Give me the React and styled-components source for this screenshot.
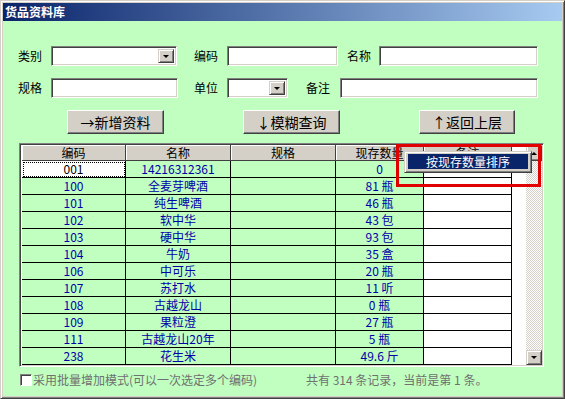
import React from 'react';
import styled, { createGlobalStyle } from 'styled-components';

const GlobalStyle = createGlobalStyle`
  html, body {
    margin: 0;
    padding: 0;
  }
  body {
    width: 565px;
    height: 399px;
    overflow: hidden;
    font-family: "Noto Sans CJK SC", "Liberation Sans", sans-serif;
    font-size: 12px;
  }
`;

const Window = styled.div`
  width: 565px;
  height: 399px;
  box-sizing: border-box;
  display: flex;
  flex-direction: column;
  background: #d4d0c8;
  border: 1px solid;
  border-color: #d4d0c8 #404040 #404040 #d4d0c8;
  box-shadow: inset 1px 1px #ffffff, inset -1px -1px #808080;
  padding: 2px;
`;

const TitleBar = styled.div`
  height: 18px;
  flex: none;
  background: linear-gradient(90deg, #0a246a, #a6caf0);
  color: #ffffff;
  font-weight: bold;
  font-size: 12px;
  line-height: 18px;
  padding-left: 2px;
`;

const Body = styled.div`
  flex: 1;
  position: relative;
  background: #c0ffc0;
  padding: 25px 0 0 15px;
  box-sizing: border-box;
`;

const FormRow = styled.div`
  display: flex;
  align-items: center;
  height: 20px;
  margin-top: ${(p) => p.$mt || 0}px;
`;

const Label = styled.span`
  width: ${(p) => p.$w}px;
  margin-left: ${(p) => p.$ml || 0}px;
  color: #000;
  font-size: 12px;
  line-height: 20px;
  flex: none;
`;

const TextBox = styled.div`
  position: relative;
  width: ${(p) => p.$w}px;
  height: 20px;
  box-sizing: border-box;
  background: #ffffff;
  border: 1px solid;
  border-color: #808080 #ffffff #ffffff #808080;
  box-shadow: inset 1px 1px #404040, inset -1px -1px #d4d0c8;
  flex: none;
`;

const DropButton = styled.div`
  position: absolute;
  right: 2px;
  top: 2px;
  width: 16px;
  height: 14px;
  box-sizing: border-box;
  background: #d4d0c8;
  border: 1px solid;
  border-color: #d4d0c8 #404040 #404040 #d4d0c8;
  box-shadow: inset 1px 1px #ffffff, inset -1px -1px #808080;
  display: flex;
  align-items: center;
  justify-content: center;

  &::after {
    content: '';
    border-left: 3px solid transparent;
    border-right: 3px solid transparent;
    border-top: 3px solid #000;
    margin-top: 1px;
  }
`;

const ButtonRow = styled.div`
  display: flex;
  gap: 79px;
  margin: 12px 0 0 49px;
`;

const Button = styled.div`
  width: ${(p) => p.$w}px;
  height: 24px;
  box-sizing: border-box;
  background: #d4d0c8;
  border: 1px solid;
  border-color: #ffffff #404040 #404040 #ffffff;
  box-shadow: inset -1px -1px #808080;
  display: flex;
  align-items: center;
  justify-content: center;
  font-size: 14px;
  color: #000;
`;

const GridFrame = styled.div`
  display: flex;
  width: 525px;
  height: 224px;
  box-sizing: border-box;
  margin: 9px 0 0 1px;
  border: 1px solid;
  border-color: #808080 #ffffff #ffffff #808080;
  box-shadow: inset 1px 1px #404040, inset -1px -1px #d4d0c8;
  padding: 1px 1px 1px 2px;
  background: #ffffff;
`;

const TableArea = styled.div`
  flex: 1;
  background: #ffffff;
`;

const TableRow = styled.div`
  display: grid;
  grid-template-columns: 104px 105px 105px 88px 88px;
`;

const HeadCell = styled.div`
  height: 16px;
  box-sizing: border-box;
  background: #d4d0c8;
  border-right: 1px solid #404040;
  border-bottom: 1px solid #404040;
  box-shadow: inset 1px 1px #ffffff;
  text-align: center;
  line-height: 15px;
  color: #000;
`;

const Cell = styled.div`
  height: 17px;
  box-sizing: border-box;
  background: ${(p) => (p.$white ? '#ffffff' : '#c0ffc0')};
  border-right: 1px solid #000;
  border-bottom: 1px solid #000;
  text-align: center;
  line-height: 16px;
  color: #0000a8;
  white-space: pre;
`;

const SelectedCell = styled(Cell)`
  background: #ffffff;
  color: #000;
  outline: 1px dotted #000;
  outline-offset: -2px;
`;

const ScrollBar = styled.div`
  width: 16px;
  display: flex;
  flex-direction: column;
  background-color: #ffffff;
  background-image: repeating-conic-gradient(#d4d0c8 0 25%, #ffffff 0 50%);
  background-size: 2px 2px;
`;

const ScrollButton = styled.div`
  width: 16px;
  height: ${(p) => p.$h}px;
  margin-top: ${(p) => (p.$bottom ? 'auto' : '0')};
  box-sizing: border-box;
  background: #d4d0c8;
  border: 1px solid;
  border-color: #d4d0c8 #404040 #404040 #d4d0c8;
  box-shadow: inset 1px 1px #ffffff, inset -1px -1px #808080;
  display: flex;
  align-items: center;
  justify-content: center;

  &::after {
    content: '';
    border-left: 3px solid transparent;
    border-right: 3px solid transparent;
    ${(p) => (p.$up ? 'border-bottom: 3px solid #000;' : 'border-top: 3px solid #000;')}
  }
`;

const Footer = styled.div`
  display: flex;
  align-items: center;
  height: 13px;
  margin: 6px 0 0 2px;
  color: #707070;
  font-size: 12px;
`;

const CheckBox = styled.div`
  width: 12px;
  height: 12px;
  box-sizing: border-box;
  background: #ffffff;
  border: 1px solid;
  border-color: #808080 #ffffff #ffffff #808080;
  box-shadow: inset 1px 1px #404040;
  margin-right: 1px;
  flex: none;
`;

const FooterLeft = styled.span`
  width: 273px;
  white-space: nowrap;
`;

const FooterRight = styled.span`
  white-space: pre;
`;

const RedMark = styled.div`
  position: absolute;
  left: 393px;
  top: 123px;
  width: 145px;
  height: 43px;
  box-sizing: border-box;
  border: 3px solid #e00000;
`;

const PopupMenu = styled.div`
  position: absolute;
  left: 401px;
  top: 130px;
  width: 128px;
  height: 22px;
  box-sizing: border-box;
  background: #d4d0c8;
  border: 1px solid;
  border-color: #d4d0c8 #404040 #404040 #d4d0c8;
  box-shadow: inset 1px 1px #ffffff, inset -1px -1px #808080;
  padding: 2px 3px 3px 3px;
`;

const MenuItem = styled.div`
  height: 15px;
  background: #0a246a;
  color: #ffffff;
  font-size: 12px;
  line-height: 15px;
  padding-left: 18px;
`;

const rows = [
  ['001', '14216312361', '', '0'],
  ['100', '全麦芽啤酒', '', '81 瓶'],
  ['101', '纯生啤酒', '', '46 瓶'],
  ['102', '软中华', '', '43 包'],
  ['103', '硬中华', '', '93 包'],
  ['104', '牛奶', '', '35 盒'],
  ['106', '中可乐', '', '20 瓶'],
  ['107', '苏打水', '', '11 听'],
  ['108', '古越龙山', '', '0 瓶'],
  ['109', '果粒澄', '', '27 瓶'],
  ['111', '古越龙山20年', '', '5 瓶'],
  ['238', '花生米', '', '49.6 斤'],
];

const headers = ['编码', '名称', '规格', '现存数量', '备注'];

const App = () => {
  return (
    <Window>
      <GlobalStyle />
      <TitleBar>货品资料库</TitleBar>
      <Body>
        <FormRow>
          <Label $w={33}>类别</Label>
          <TextBox $w={126}>
            <DropButton />
          </TextBox>
          <Label $w={33} $ml={17}>编码</Label>
          <TextBox $w={111} />
          <Label $w={32} $ml={9}>名称</Label>
          <TextBox $w={159} />
        </FormRow>
        <FormRow $mt={12}>
          <Label $w={33}>规格</Label>
          <TextBox $w={127} />
          <Label $w={33} $ml={16}>单位</Label>
          <TextBox $w={61}>
            <DropButton />
          </TextBox>
          <Label $w={34} $ml={18}>备注</Label>
          <TextBox $w={198} />
        </FormRow>
        <ButtonRow>
          <Button $w={97}>→新增资料</Button>
          <Button $w={97}>↓模糊查询</Button>
          <Button $w={96}>↑返回上层</Button>
        </ButtonRow>
        <GridFrame>
          <TableArea>
            <TableRow>
              {headers.map((h) => (
                <HeadCell key={h}>{h}</HeadCell>
              ))}
            </TableRow>
            {rows.map((r, i) => (
              <TableRow key={r[0]}>
                {i === 0 ? <SelectedCell>{r[0]}</SelectedCell> : <Cell>{r[0]}</Cell>}
                <Cell>{r[1]}</Cell>
                <Cell>{r[2]}</Cell>
                <Cell>{r[3]}</Cell>
                <Cell $white />
              </TableRow>
            ))}
          </TableArea>
          <ScrollBar>
            <ScrollButton $h={16} $up />
            <ScrollButton $h={15} $bottom />
          </ScrollBar>
        </GridFrame>
        <Footer>
          <CheckBox />
          <FooterLeft>采用批量增加模式(可以一次选定多个编码)</FooterLeft>
          <FooterRight>共有 314 条记录，当前是第 1 条。</FooterRight>
        </Footer>
        <RedMark />
        <PopupMenu>
          <MenuItem>按现存数量排序</MenuItem>
        </PopupMenu>
      </Body>
    </Window>
  );
};

export default App;
